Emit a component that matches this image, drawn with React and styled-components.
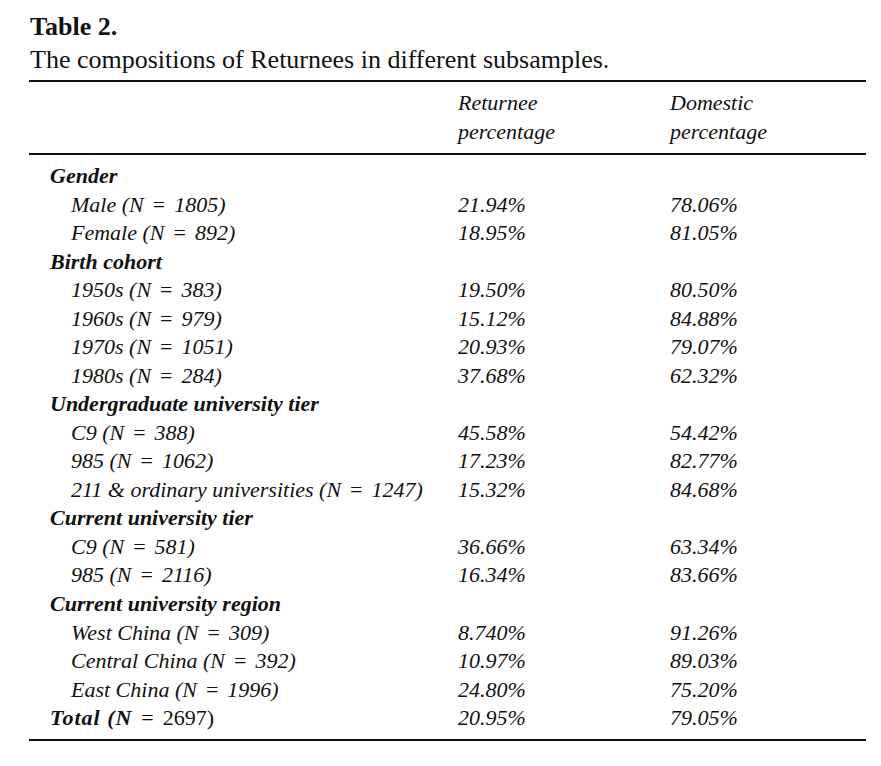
import React from "react";
import styled, { createGlobalStyle } from "styled-components";

const rows = [
  { label: "Gender", group: true },
  { label: "Male (N = 1805)", r: "21.94%", d: "78.06%" },
  { label: "Female (N = 892)", r: "18.95%", d: "81.05%" },
  { label: "Birth cohort", group: true },
  { label: "1950s (N = 383)", r: "19.50%", d: "80.50%" },
  { label: "1960s (N = 979)", r: "15.12%", d: "84.88%" },
  { label: "1970s (N = 1051)", r: "20.93%", d: "79.07%" },
  { label: "1980s (N = 284)", r: "37.68%", d: "62.32%" },
  { label: "Undergraduate university tier", group: true },
  { label: "C9 (N = 388)", r: "45.58%", d: "54.42%" },
  { label: "985 (N = 1062)", r: "17.23%", d: "82.77%" },
  { label: "211 & ordinary universities (N = 1247)", r: "15.32%", d: "84.68%" },
  { label: "Current university tier", group: true },
  { label: "C9 (N = 581)", r: "36.66%", d: "63.34%" },
  { label: "985 (N = 2116)", r: "16.34%", d: "83.66%" },
  { label: "Current university region", group: true },
  { label: "West China (N = 309)", r: "8.740%", d: "91.26%" },
  { label: "Central China (N = 392)", r: "10.97%", d: "89.03%" },
  { label: "East China (N = 1996)", r: "24.80%", d: "75.20%" },
];

// split "Male (N = 1805)" so the equals sign gets math-style spacing
const renderLabel = (text) => {
  const parts = text.split(" = ");
  if (parts.length < 2) return text;
  return (
    <>
      {parts[0]}
      <Eq>=</Eq>
      {parts[1]}
    </>
  );
};

const App = () => {
  return (
    <Page>
      <GlobalStyle />
      <Title>Table 2.</Title>
      <Caption>The compositions of Returnees in different subsamples.</Caption>
      <Table>
        <colgroup>
          <col style={{ width: 429 }} />
          <col style={{ width: 212 }} />
          <col />
        </colgroup>
        <thead>
          <tr>
            <HeadCell />
            <HeadCell>
              Returnee
              <br />
              percentage
            </HeadCell>
            <HeadCell>
              Domestic
              <br />
              percentage
            </HeadCell>
          </tr>
        </thead>
        <tbody>
          {rows.map((row, i) => (
            <Row key={i} $first={i === 0}>
              <Label $group={row.group}>{renderLabel(row.label)}</Label>
              <Value>{row.r}</Value>
              <Value>{row.d}</Value>
            </Row>
          ))}
          <Row $last>
            <Label $group>
              <Wide>Total (N</Wide>
              <Upright>
                <Eq>=</Eq>2697)
              </Upright>
            </Label>
            <Value>20.95%</Value>
            <Value>79.05%</Value>
          </Row>
        </tbody>
      </Table>
    </Page>
  );
};

export default App;

const GlobalStyle = createGlobalStyle`
  body {
    margin: 0;
    background: #fff;
    color: #111;
    font-family: "Liberation Serif", "Times New Roman", serif;
  }
`;

const Page = styled.div`
  width: 837px;
  padding: 10px 0 0 29px;
`;

const Title = styled.div`
  font-size: 26px;
  line-height: 33px;
  font-weight: 700;
  padding-left: 1px;
`;

const Caption = styled.div`
  font-size: 26px;
  line-height: 33px;
  padding-left: 1px;
  margin-bottom: 4px;
`;

const Table = styled.table`
  width: 837px;
  border-collapse: collapse;
  table-layout: fixed;
  border-top: 2px solid #111;
  border-bottom: 2px solid #111;
  font-size: 22px;
  font-style: italic;
`;

const HeadCell = styled.th`
  text-align: left;
  font-weight: 400;
  line-height: 28.5px;
  padding: 7px 0 7px;
  border-bottom: 2px solid #111;
  vertical-align: top;
`;

const Row = styled.tr`
  height: 28.53px;

  td {
    line-height: 28.53px;
    padding: 0;
    padding-top: ${(p) => (p.$first ? "7px" : "0")};
    padding-bottom: ${(p) => (p.$last ? "6px" : "0")};
    white-space: nowrap;
  }
`;

const Label = styled.td`
  padding-left: ${(p) => (p.$group ? "21px" : "42px")} !important;
  font-weight: ${(p) => (p.$group ? 700 : 400)};
`;

const Value = styled.td``;

const Eq = styled.span`
  font-style: normal;
  font-weight: 400;
  margin: 0 9px;
`;

const Wide = styled.span`
  letter-spacing: 1px;
`;

const Upright = styled.span`
  font-weight: 400;
  font-style: normal;
`;
